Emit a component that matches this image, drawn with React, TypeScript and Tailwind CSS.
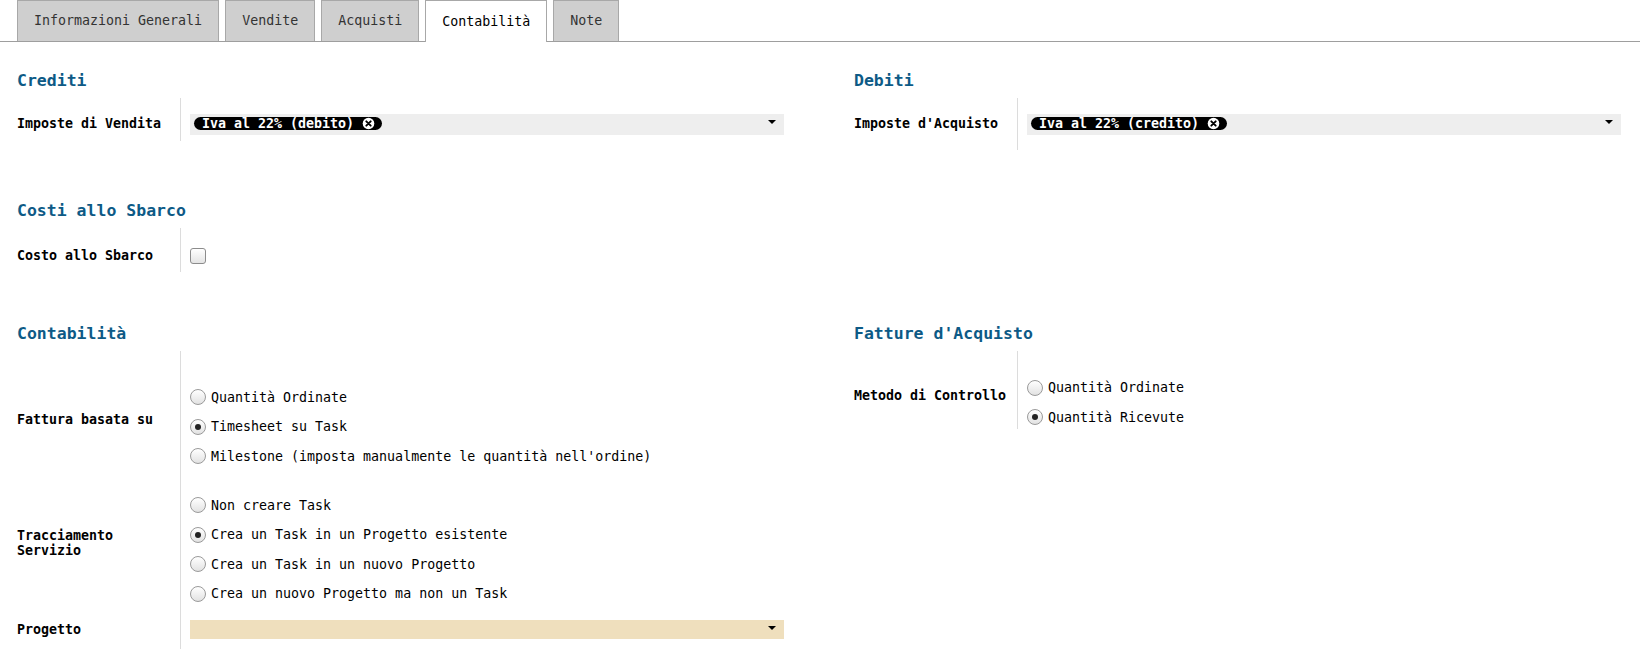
import React from "react";

const Heading = ({ children }: { children: React.ReactNode }) => (
  <h2 className="text-[16.5px] leading-[20px] font-bold text-[#0d5a86]">{children}</h2>
);

const Label = ({ children, pt }: { children: React.ReactNode; pt: string }) => (
  <div className={`w-[163px] shrink-0 font-bold leading-[15px] ${pt}`}>{children}</div>
);

const Arrow = () => (
  <span className="mt-[6px] mr-[8px] h-0 w-0 border-x-[4px] border-t-[4px] border-x-transparent border-t-black" />
);

const TagX = () => (
  <svg width="13" height="13" viewBox="0 0 13 13" className="shrink-0">
    <circle cx="6.5" cy="6.5" r="5.8" fill="white" />
    <path d="M4.3 4.3 L8.7 8.7 M8.7 4.3 L4.3 8.7" stroke="black" strokeWidth="1.9" strokeLinecap="round" />
  </svg>
);

const Many2Many = ({ tag }: { tag: string }) => (
  <div className="flex h-[21px] flex-1 items-start justify-between bg-[#eeeeee] pl-[4px]">
    <span className="mt-[3px] flex h-[13px] items-center gap-[8px] rounded-full bg-black pl-[8px] pr-[7px] font-bold text-white">
      <span className="leading-[13px]">{tag}</span>
      <TagX />
    </span>
    <Arrow />
  </div>
);

const Radio = ({ label, checked }: { label: string; checked?: boolean }) => (
  <div className="flex h-[29.5px] items-center gap-[5px]">
    <span className="flex h-[16px] w-[16px] items-center justify-center rounded-full border border-[#9a9a9a] bg-gradient-to-b from-white to-[#e2e2e2]">
      {checked && <span className="h-[6px] w-[6px] rounded-full bg-[#222]" />}
    </span>
    <span className="leading-[15px]">{label}</span>
  </div>
);

const Field = ({ children, className }: { children: React.ReactNode; className: string }) => (
  <div className={`flex-1 border-l border-[#dcdcdc] pl-[9px] ${className}`}>{children}</div>
);

export default function App() {
  const tabs = ["Informazioni Generali", "Vendite", "Acquisti", "Contabilità", "Note"];

  return (
    <div className="h-[662px] w-[1640px] overflow-hidden bg-white font-[family-name:'DejaVu_Sans_Mono',monospace] text-[13.3px] text-black">
      {/* tabs */}
      <div className="flex h-[42px] items-end gap-[6px] border-b border-[#9e9e9e] pl-[17px]">
        {tabs.map((t) => (
          <div
            key={t}
            className={
              t === "Contabilità"
                ? "-mb-px flex h-[42px] items-center border border-b-0 border-[#a8a8a8] bg-white px-[16px] text-black"
                : "flex h-[41px] items-center border border-b-0 border-[#a8a8a8] bg-[#cfcfcf] px-[16px] text-[#333]"
            }
          >
            {t}
          </div>
        ))}
      </div>

      <div className="pl-[17px] pr-[19px]">
        {/* Crediti / Debiti */}
        <div className="mt-[29px] grid grid-cols-2 gap-x-[70px]">
          <div>
            <Heading>Crediti</Heading>
            <div className="mt-[7px] flex">
              <Label pt="pt-[18px]">Imposte di Vendita</Label>
              <Field className="flex pb-[6px] pt-[16px]">
                <Many2Many tag="Iva al 22% (debito)" />
              </Field>
            </div>
          </div>
          <div>
            <Heading>Debiti</Heading>
            <div className="mt-[7px] flex">
              <Label pt="pt-[18px]">Imposte d'Acquisto</Label>
              <Field className="flex pb-[15px] pt-[16px]">
                <Many2Many tag="Iva al 22% (credito)" />
              </Field>
            </div>
          </div>
        </div>

        {/* Costi allo Sbarco */}
        <div className="mt-[51px] grid grid-cols-2 gap-x-[70px]">
          <div>
            <Heading>Costi allo Sbarco</Heading>
            <div className="mt-[7px] flex">
              <Label pt="pt-[19.5px]">Costo allo Sbarco</Label>
              <Field className="pb-[8px] pt-[20px]">
                <div className="h-[16px] w-[16px] rounded-[3px] border border-[#8c8c8c] bg-gradient-to-b from-white to-[#e4e4e4]" />
              </Field>
            </div>
          </div>
          <div />
        </div>

        {/* Contabilità / Fatture d'Acquisto */}
        <div className="mt-[51.5px] grid grid-cols-2 gap-x-[70px]">
          <div>
            <Heading>Contabilità</Heading>
            <div className="mt-[7.5px] flex">
              <Label pt="pt-[60.5px]">Fattura basata su</Label>
              <Field className="pb-[17.5px] pt-[31.5px]">
                <Radio label="Quantità Ordinate" />
                <Radio label="Timesheet su Task" checked />
                <Radio label="Milestone (imposta manualmente le quantità nell'ordine)" />
              </Field>
            </div>
            <div className="flex">
              <Label pt="pt-[39.75px] leading-[14.5px]">
                Tracciamento
                <br />
                Servizio
              </Label>
              <Field className="pb-[4px] pt-[2px]">
                <Radio label="Non creare Task" />
                <Radio label="Crea un Task in un Progetto esistente" checked />
                <Radio label="Crea un Task in un nuovo Progetto" />
                <Radio label="Crea un nuovo Progetto ma non un Task" />
              </Field>
            </div>
            <div className="flex">
              <Label pt="pt-[9.7px]">Progetto</Label>
              <Field className="flex pb-[10px] pt-[7.5px]">
                <div className="flex h-[19px] flex-1 items-start justify-end bg-[#efdfbd]">
                  <Arrow />
                </div>
              </Field>
            </div>
          </div>
          <div>
            <Heading>Fatture d'Acquisto</Heading>
            <div className="mt-[7.5px] flex">
              <Label pt="pt-[37px]">Metodo di Controllo</Label>
              <Field className="h-[77.5px] pt-[22px]">
                <Radio label="Quantità Ordinate" />
                <Radio label="Quantità Ricevute" checked />
              </Field>
            </div>
          </div>
        </div>
      </div>
    </div>
  );
}
